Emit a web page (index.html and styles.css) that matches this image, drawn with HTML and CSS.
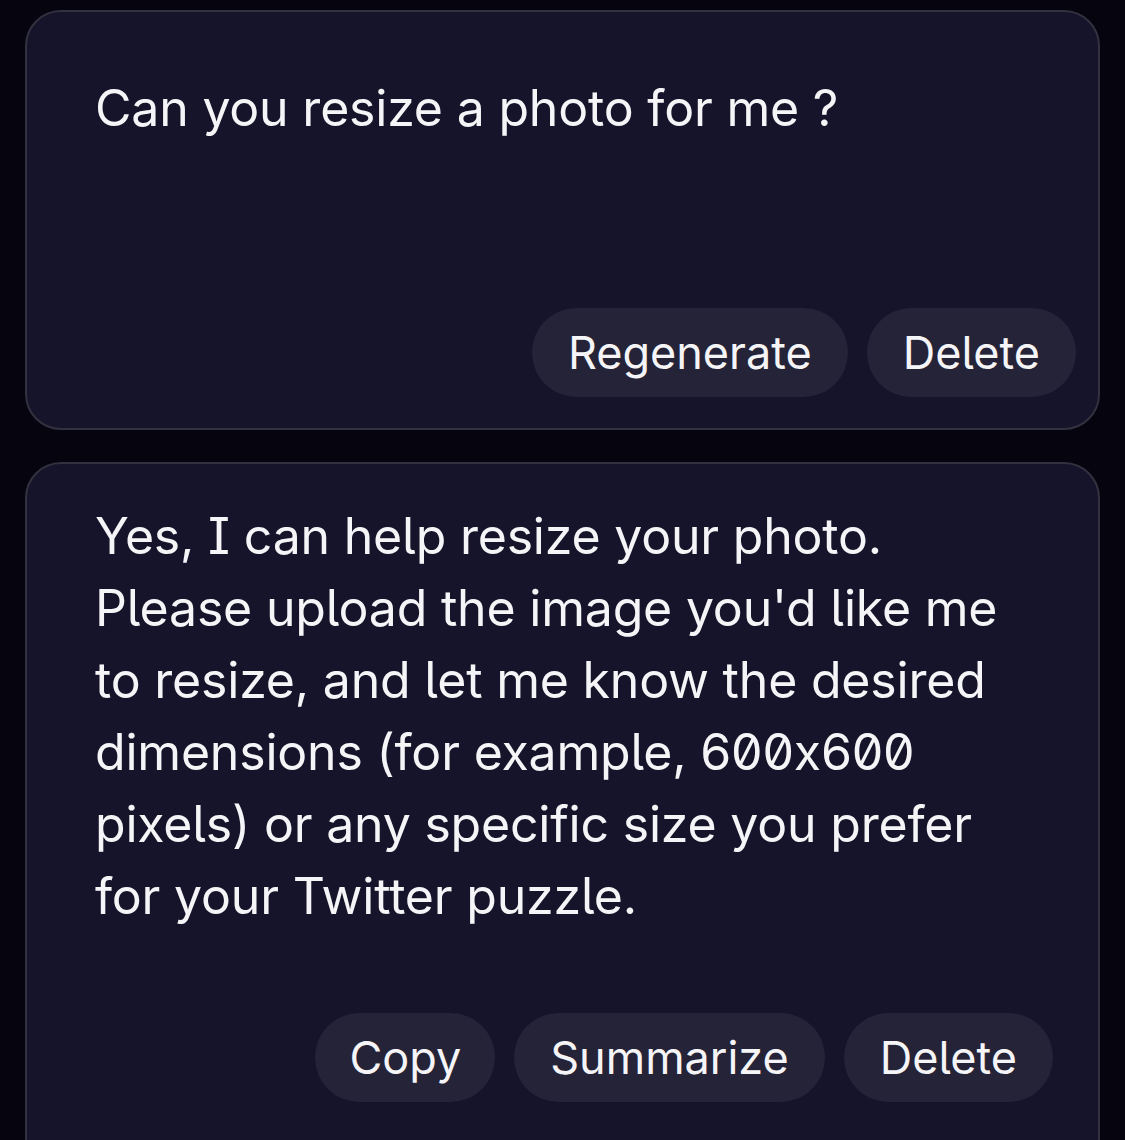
FILE: index.html
```html
<!DOCTYPE html>
<html lang="en">
<head>
  <meta charset="UTF-8">
  <meta name="viewport" content="width=device-width, initial-scale=1.0">
  <title>Chat</title>
  <link rel="stylesheet" href="styles.css">
</head>
<body>
  <div class="chat">
    <div class="message message-user">
      <p class="message-text">Can you resize a photo for me ?</p>
      <div class="actions">
        <button class="pill">Regenerate</button>
        <button class="pill">Delete</button>
      </div>
    </div>

    <div class="message message-bot">
      <p class="message-text">Yes, I can help resize your photo. Please upload the image you'd like me to resize, and let me know the desired dimensions (for example, 600x600 pixels) or any specific size you prefer for your Twitter puzzle.</p>
      <div class="actions">
        <button class="pill">Copy</button>
        <button class="pill">Summarize</button>
        <button class="pill">Delete</button>
      </div>
    </div>
  </div>
</body>
</html>
```

FILE: styles.css
```css
* {
  margin: 0;
  padding: 0;
  box-sizing: border-box;
}

body {
  font-family: 'Inter', 'Noto Sans', sans-serif;
  font-feature-settings: "zero", "cv05", "cv08";
  background-color: #05040f;
  color: #f5f5f7;
  height: 1140px;
  overflow: hidden;
}

.chat {
  display: flex;
  flex-direction: column;
  gap: 32px;
  padding: 10px 25px 0;
}

.message {
  display: flex;
  flex-direction: column;
  background: #16142a;
  border: 2px solid #33313f;
  border-radius: 36px;
}

.message-user {
  height: 420px;
  padding: 60px 22px 31px 68px;
}

.message-bot {
  padding: 36px 45px 60px 68px;
  height: 720px;
}

.message-text {
  font-size: 50px;
  line-height: 72px;
  letter-spacing: -0.2px;
}

.message-bot .message-text {
  margin-right: 30px;
}

.actions {
  display: flex;
  justify-content: flex-end;
  gap: 19px;
  margin-top: auto;
}

.message-bot .actions {
  margin-top: 81px;
}

.pill {
  font-family: inherit;
  font-feature-settings: inherit;
  background: #252337;
  color: #f5f5f7;
  border: none;
  border-radius: 45px;
  height: 89px;
  padding: 0 36px;
  font-size: 45px;
  cursor: pointer;
}

.pill:first-child:nth-last-child(3) {
  padding: 0 34px;
}
```
